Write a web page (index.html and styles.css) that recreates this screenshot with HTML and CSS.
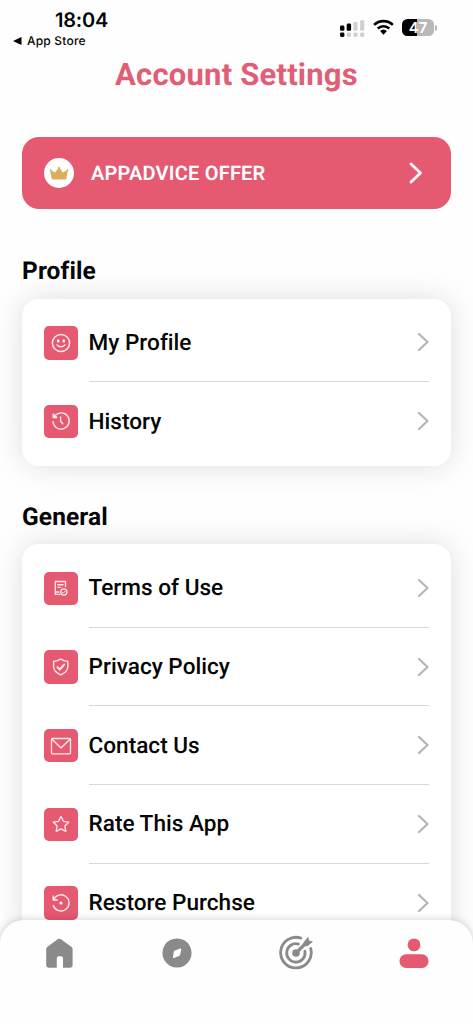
FILE: index.html
```html
<!DOCTYPE html>
<html lang="en">
<head>
<meta charset="utf-8">
<title>Account Settings</title>
<link rel="stylesheet" href="styles.css">
</head>
<body>
<svg width="0" height="0" class="defs">
  <symbol id="chevron" viewBox="0 0 12 20"><path d="M2 2l8.500 8L2 18" fill="none" stroke="currentColor" stroke-width="2.200" stroke-linecap="round" stroke-linejoin="round"/></symbol>
</svg>
<div class="screen">
  <header class="status">
    <div class="status-left">
      <div class="clock">18:04</div>
      <div class="back"><svg width="9" height="8" viewBox="0 0 9 8"><path d="M0 4L8.5 0v8z"/></svg><span>App Store</span></div>
    </div>
    <div class="status-right">
      <svg class="signal" width="25" height="18" viewBox="0 0 25 18">
        <g fill="#000"><rect x="0" y="5.600" width="4.4" height="5.200" rx="1.3"/><rect x="0" y="12.600" width="4.4" height="4.400" rx="1.4"/><rect x="6.7" y="3.600" width="4.4" height="7.200" rx="1.3"/></g>
        <g fill="#d0d0d0"><rect x="6.7" y="12.600" width="4.2" height="4.400" rx="1.4"/><rect x="13.4" y="2" width="4.2" height="8.800" rx="1.3"/><rect x="13.4" y="12.600" width="4.2" height="4.400" rx="1.4"/><rect x="20.1" y="0.2" width="4.2" height="10.600" rx="1.3"/><rect x="20.1" y="12.600" width="4.2" height="4.400" rx="1.4"/></g>
      </svg>
      <svg class="wifi" width="21" height="16" viewBox="0 0 22 16">
        <g fill="none" stroke="#000" stroke-width="2.8"><path d="M1.2 5.8a14.2 14.2 0 0 1 19.6 0"/><path d="M4.9 9.6a9 9 0 0 1 12.2 0"/></g>
        <path d="M7.4 12.3a5.3 5.3 0 0 1 7.2 0L11 16z"/>
      </svg>
      <div class="battery"><span>47</span></div>
      <div class="battery-tip"></div>
    </div>
  </header>

  <main class="content">
    <h1>Account Settings</h1>
    <div class="offer">
      <span class="crown"><svg width="20" height="14" viewBox="0 0 20 14"><path d="M2.800 13.500L1.200 4.900a.9.900 0 1 1 1.200-.7L6 6.500 9.100 2.600a1.100 1.100 0 1 1 1.800 0L14 6.500l3.600-2.300a.9.900 0 1 1 1.200.7l-1.600 8.600z" fill="#dcae5b"/></svg></span>
      <span class="offer-text">APPADVICE OFFER</span>
      <svg class="offer-chevron" width="14" height="22" viewBox="0 0 14 22"><path d="M2 2l9.5 9L2 20" fill="none" stroke="#fff" stroke-width="2.8" stroke-linecap="round" stroke-linejoin="round"/></svg>
    </div>

    <h2 class="profile-title">Profile</h2>
    <section class="card">
      <div class="row">
        <span class="tile"><svg width="22" height="22" viewBox="0 0 22 22"><circle cx="11" cy="11" r="8.6" stroke-width="1.5"/><path d="M7 13q4 3.5 8 0" stroke-width="1.5"/><g fill="#fff" stroke="none"><ellipse cx="8.2" cy="8.9" rx="1.3" ry="1.6"/><ellipse cx="13.8" cy="8.9" rx="1.3" ry="1.6"/></g></svg></span>
        <div class="label"><span>My Profile</span><svg class="chevron"><use href="#chevron"/></svg></div>
      </div>
      <div class="row">
        <span class="tile"><svg width="22" height="22" viewBox="0 0 22 22"><path d="M5 5.600A8.100 8.100 0 1 1 3 11.500M10.600 6.800v4.400l2.200 2.600"/><path d="M3.200 4v3.600h3.600z" fill="#fff"/></svg></span>
        <div class="label"><span>History</span><svg class="chevron"><use href="#chevron"/></svg></div>
      </div>
    </section>

    <h2 class="general-title">General</h2>
    <section class="card">
      <div class="row">
        <span class="tile"><svg width="22" height="22" viewBox="0 0 22 22"><path d="M15.500 9.500V4.500H5.300v12.800h4.500M7.800 7.700h5.200M7.800 10.300h2.800M5.300 15h3.500"/><circle cx="13.800" cy="15" r="3.100"/><path d="M12.400 15.100l1 1 1.900-2.100" stroke-width="1"/></svg></span>
        <div class="label"><span>Terms of Use</span><svg class="chevron"><use href="#chevron"/></svg></div>
      </div>
      <div class="row">
        <span class="tile"><svg width="22" height="22" viewBox="0 0 22 22"><path d="M10.700 3c2 1.600 4.300 2.200 7.100 2.400v5.400c0 3.700-3 6.300-7.100 8-4-1.700-7.100-4.300-7.100-8V5.400C6.400 5.200 8.700 4.600 10.700 3z"/><path d="M7.400 11.200l2.300 2.300 4.500-5" stroke-width="1.900"/></svg></span>
        <div class="label"><span>Privacy Policy</span><svg class="chevron"><use href="#chevron"/></svg></div>
      </div>
      <div class="row">
        <span class="tile"><svg width="22" height="22" viewBox="0 0 22 22"><rect x="1.500" y="3.500" width="19" height="15.300" rx="1"/><path d="M1.900 4l9.100 9 9.100-9"/></svg></span>
        <div class="label"><span>Contact Us</span><svg class="chevron"><use href="#chevron"/></svg></div>
      </div>
      <div class="row">
        <span class="tile"><svg width="22" height="22" viewBox="0 0 22 22"><path d="M11 3.400l2.400 4.900 5.400.8-3.900 3.900.9 5.300-4.800-2.500-4.800 2.500.9-5.300-3.900-3.900 5.400-.8z"/></svg></span>
        <div class="label"><span>Rate This App</span><svg class="chevron"><use href="#chevron"/></svg></div>
      </div>
      <div class="row">
        <span class="tile"><svg width="22" height="22" viewBox="0 0 22 22"><path d="M3.400 8A8.100 8.100 0 1 1 3.300 13.500M3.200 4v4h4"/><circle cx="11" cy="11" r="1.600" fill="#fff" stroke="none"/></svg></span>
        <div class="label"><span>Restore Purchse</span><svg class="chevron"><use href="#chevron"/></svg></div>
      </div>
    </section>
  </main>

  <nav class="tabs">
    <a class="tab"><svg width="36" height="36" viewBox="0 0 36 36"><path d="M17 4.100q1.300-.8 2.600 0l11 7.800q1 .8 1 2V30q0 2.800-2.800 2.800H22v-9.600q0-2-2-2h-2.200q-2 0-2 2v9.600H8q-2.800 0-2.800-2.800V13.900q0-1.200 1-2z"/></svg></a>
    <a class="tab"><svg width="36" height="36" viewBox="0 0 36 36"><path fill-rule="evenodd" d="M18 3.400a14.600 14.600 0 1 0 .01 0zM13.900 22.300l.9-5.400q.2-1 1.100-1.400l5.300-1.900q1.200-.3 1 .8l-1 5.200q-.2 1.100-1.200 1.500l-5 1.800q-1.200.3-1.100-.6z"/></svg></a>
    <a class="tab"><svg width="36" height="36" viewBox="0 0 36 36"><g fill="none" stroke="currentColor" stroke-width="2.800" stroke-linecap="round"><path d="M22.800 3.100A15.300 15.300 0 1 0 32.700 13.500"/><path d="M20.400 9.100A9.200 9.200 0 1 0 26.900 16.200"/><path d="M18 18L29 7" stroke-width="3.200"/></g><circle cx="18" cy="18" r="3.800"/><path d="M25.500 7.600L30.200 1.500l.8 4 4 .9-5.600 4.900-4-.4z"/></svg></a>
    <a class="tab active"><svg width="36" height="36" viewBox="0 0 36 36"><circle cx="18" cy="9.900" r="6.400"/><rect x="3.500" y="19.300" width="29" height="13.600" rx="6.500"/></svg></a>
  </nav>
</div>
</body>
</html>
```
FILE: styles.css
```css
* { box-sizing: border-box; }
body { margin: 0; background: #fff; color: #050505; font-family: Roboto, sans-serif; text-rendering: geometricPrecision; font-variant-ligatures: none; }
.defs { display: block; }
.screen { width: 473px; height: 1024px; overflow: hidden; display: flex; flex-direction: column; background: #fefefe; }

.status { flex: none; height: 54px; display: flex; justify-content: space-between; padding: 9px 36px 0 13px; font-family: Inter, sans-serif; }
.clock { margin-left: 42px; font-size: 20px; line-height: 22px; font-weight: 600; letter-spacing: -0.2px; }
.back { display: flex; align-items: center; gap: 5px; margin-top: 2px; font-size: 12px; line-height: 16px; font-weight: 500; letter-spacing: 0.2px; }
.status-right { display: flex; align-items: flex-start; padding-top: 9.5px; }
.signal { margin: 1px 8px 0 0; }
.wifi { margin: 0.5px 8px 0 0; }
.battery { width: 32px; height: 17px; border-radius: 5.5px; background: linear-gradient(90deg, #000 47%, #b8b8b8 47%); color: #fff; font-size: 15px; line-height: 17px; font-weight: 600; text-align: center; }
.battery-tip { width: 2px; height: 6px; margin: 6px 0 0 1px; border-radius: 0 2px 2px 0; background: #b8b8b8; }

.content { flex: none; height: 892px; padding: 0 22px; overflow: hidden; }
h1 { margin: 0; height: 42px; line-height: 42px; text-align: center; font-size: 31px; font-weight: 700; letter-spacing: 0.2px; color: #e05e76; }
.offer { display: flex; align-items: center; height: 72px; margin-top: 41px; padding: 0 28px 0 22px; border-radius: 17px; background: #e55971; color: #fff; }
.crown { display: flex; align-items: center; justify-content: center; width: 30px; height: 30px; border-radius: 50%; background: #fff; }
.offer-text { flex: 1; margin-left: 17px; font-size: 20px; font-weight: 600; letter-spacing: 0.2px; }
h2 { margin: 0; font-size: 24.5px; line-height: 31px; margin-bottom: -1px; font-weight: 700; letter-spacing: 0.1px; }
.profile-title { margin-top: 46px; }
.general-title { margin-top: 35px; }
.card { margin-top: 13.5px; padding: 5px 22px; border-radius: 17px; background: #fff; box-shadow: 0 0 30px rgba(0, 0, 0, 0.13); }
h2 + .card { margin-top: 13.5px; }
.row { display: flex; align-items: center; height: 78.6px; }
.tile { display: flex; align-items: center; justify-content: center; flex: none; width: 33.5px; height: 33.5px; margin-right: 11px; border-radius: 5px; background: #e55971; }
.tile svg { fill: none; stroke: #ffe9ec; stroke-width: 1.35; stroke-linecap: round; stroke-linejoin: round; }
.label { flex: 1; height: 100%; display: flex; align-items: center; justify-content: space-between; border-bottom: 1px solid #d8d8d8; font-size: 22.6px; font-weight: 500; }
.row:last-child .label { border-bottom: 0; }
.chevron { width: 12px; height: 20px; color: #b5b5b5; }

.tabs { position: relative; flex: none; display: flex; height: 104px; margin-top: -26px; padding-top: 15px; border-radius: 24px 24px 0 0; background: #fefefe; box-shadow: 0 0 9px rgba(0, 0, 0, 0.2); }
.tab { flex: 1; display: flex; justify-content: center; color: #8a8a8a; }
.tab svg { fill: currentColor; }
.tab.active { color: #e55971; }
```
